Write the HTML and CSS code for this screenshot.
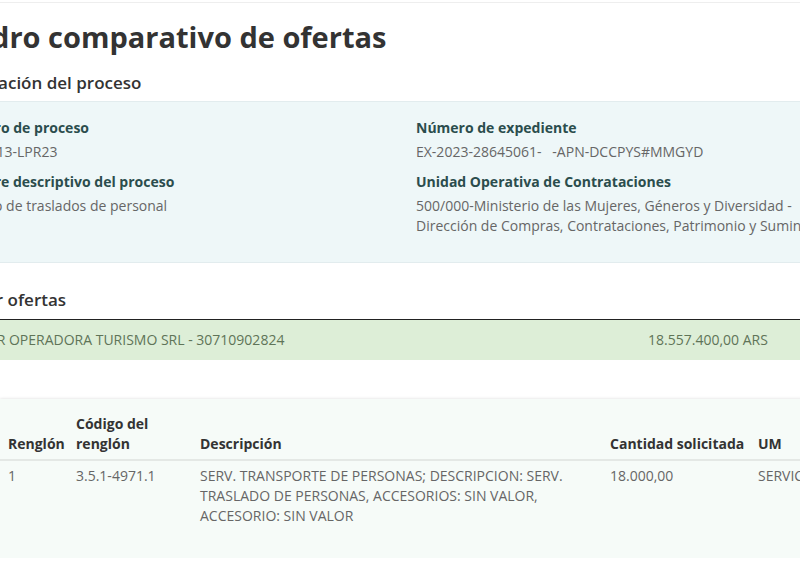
FILE: index.html
```html
<!DOCTYPE html>
<html lang="es">
<head>
    <meta charset="UTF-8">
    <meta name="viewport" content="width=device-width, initial-scale=1.0">
    <title>Cuadro comparativo de ofertas</title>
    <link rel="stylesheet" href="styles.css">
</head>
<body>
    <div class="top-line"></div>
    <div class="page">
        <h1 class="page-title">Cuadro comparativo de ofertas</h1>

        <h2 class="section-title">Información del proceso</h2>
        <div class="info-panel">
            <div class="info-col">
                <div class="field">
                    <div class="field-label">Número de proceso</div>
                    <div class="field-value">401-0013-LPR23</div>
                </div>
                <div class="field">
                    <div class="field-label">Nombre descriptivo del proceso</div>
                    <div class="field-value">Servicio de traslados de personal</div>
                </div>
            </div>
            <div class="info-col">
                <div class="field">
                    <div class="field-label">Número de expediente</div>
                    <div class="field-value">EX-2023-28645061- &nbsp;&nbsp;-APN-DCCPYS#MMGYD</div>
                </div>
                <div class="field">
                    <div class="field-label">Unidad Operativa de Contrataciones</div>
                    <div class="field-value wide">500/000-Ministerio de las Mujeres, Géneros y Diversidad - Dirección de Compras, Contrataciones, Patrimonio y Suministros</div>
                </div>
            </div>
        </div>

        <h2 class="section-title section-offers">Evaluar ofertas</h2>
        <div class="offer-row">
            <span class="offer-name">ALTAIR OPERADORA TURISMO SRL - 30710902824</span>
            <span class="offer-amount">18.557.400,00 ARS</span>
        </div>
    </div>

    <div class="items-panel">
        <table class="items-table">
            <colgroup>
                <col style="width: 68px">
                <col style="width: 124px">
                <col style="width: 410px">
                <col style="width: 148px">
                <col style="width: 160px">
            </colgroup>
            <thead>
                <tr>
                    <th>Renglón</th>
                    <th>Código del renglón</th>
                    <th>Descripción</th>
                    <th class="nowrap">Cantidad solicitada</th>
                    <th>UM</th>
                </tr>
            </thead>
            <tbody>
                <tr>
                    <td>1</td>
                    <td>3.5.1-4971.1</td>
                    <td>SERV. TRANSPORTE DE PERSONAS; DESCRIPCION: SERV. TRASLADO DE PERSONAS, ACCESORIOS: SIN VALOR, ACCESORIO: SIN VALOR</td>
                    <td>18.000,00</td>
                    <td>SERVICIO</td>
                </tr>
            </tbody>
        </table>
    </div>
</body>
</html>
```

FILE: styles.css
```css
body {
    font-family: 'Open Sans', 'Liberation Sans', sans-serif;
    font-size: 14px;
    line-height: 20px;
    color: #555;
    background-color: #fff;
    margin: 0;
    padding: 0;
    overflow: hidden;
}
.top-line {
    height: 2px;
    border-bottom: 1px solid #eeeeee;
}
.page {
    margin-left: -58px;
    width: 1000px;
}
.page-title {
    font-family: 'Open Sans', 'Liberation Sans', sans-serif;
    font-size: 29px;
    font-weight: 700;
    line-height: 34px;
    color: #333;
    margin: 17px 0 0 -6px;
}
.section-title {
    font-family: 'Open Sans', 'Liberation Sans', sans-serif;
    font-size: 17px;
    font-weight: 600;
    line-height: 24px;
    color: #333;
    margin: 17px 0 6px 0;
}
.info-panel {
    display: grid;
    grid-template-columns: 464px 1fr;
    background-color: #eef7f8;
    border-top: 1px solid #e2ecee;
    border-bottom: 1px solid #e2ecee;
    padding: 16px 0 26px 10px;
}
.field {
    margin-bottom: 10px;
}
.field:last-child {
    margin-bottom: 0;
}
.field-label {
    font-weight: 700;
    color: #2b4d4d;
    margin-bottom: 4px;
}
.field-value {
    color: #666;
}
.field-value.wide {
    max-width: 430px;
}
.section-offers {
    margin: 25px 0 7px 0;
}
.offer-row {
    display: grid;
    grid-template-columns: 688px 1fr;
    background-color: #ddeed7;
    border-top: 1px solid #222;
    padding: 10px 0 10px 18px;
    color: #5f7458;
}
.items-panel {
    margin-top: 39px;
    background-color: #f6fbf8;
    box-shadow: 0 0 3px rgba(0, 0, 0, 0.15);
    padding: 9px 0 27px 0;
    width: 1000px;
}
.items-table {
    width: 910px;
    border-collapse: collapse;
    table-layout: fixed;
}
.items-table th {
    text-align: left;
    vertical-align: bottom;
    font-weight: 700;
    color: #333;
    padding: 6px 8px 5px 8px;
    border-bottom: 2px solid #e4e8e5;
}
.items-table th.nowrap {
    white-space: nowrap;
}
.items-table td {
    vertical-align: top;
    padding: 5px 8px;
    color: #666;
}
```
